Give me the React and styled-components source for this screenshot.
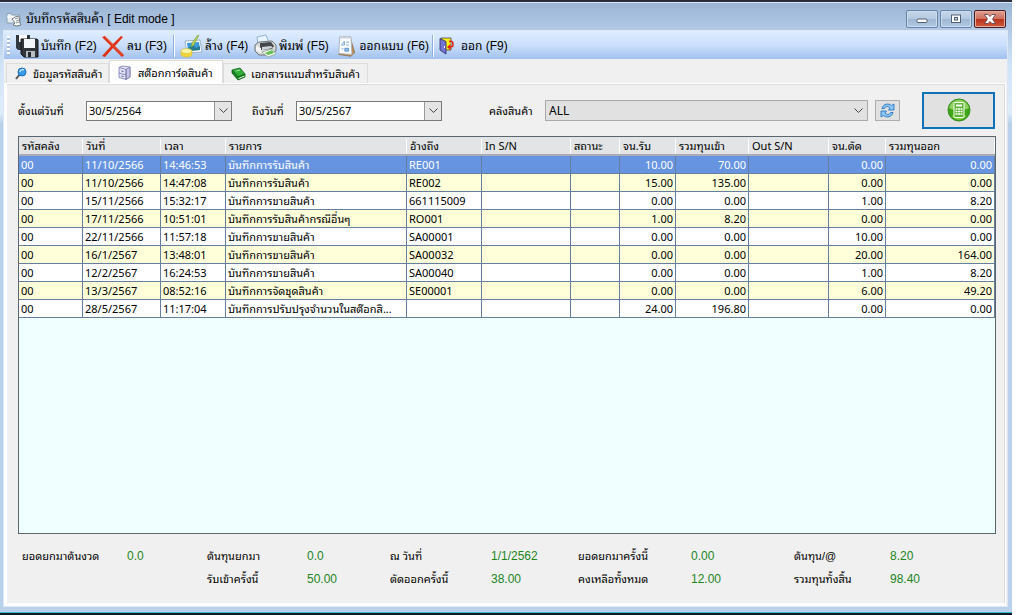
import React from "react";
import styled, {createGlobalStyle} from 'styled-components';

const FONT_UI = '"Liberation Sans", "Noto Sans Thai Looped", "Noto Sans Thai", sans-serif';
const FONT_GRID = '"Noto Sans", "Noto Sans Thai Looped", "Noto Sans Thai", sans-serif';

const color = {
    frame: '#b9d1ea',
    face: '#f0f0f0',
    line: '#dcdcdc',
    grid: '#64809c',
    selected: '#6694e0',
    alternate: '#ffffd9',
    empty: '#f0ffff',
    green: '#1d861d',
};

const GlobalStyle = createGlobalStyle`
    * {
        box-sizing: border-box;
    }
    body {
        margin: 0;
        background: #fff;
        color: #000;
        font: 12px/16px ${FONT_UI};
    }
    button, input, select {
        font: inherit;
        color: inherit;
    }
`;

const Window = styled.div`
    display: flex;
    flex-direction: column;
    min-height: 100vh;
    margin-right: 5px;
    padding: 0 5px 7px 4px;
    background: linear-gradient(#99b4d4 0, #b5cce8 31px, #cfe2f6 60px, #e0eefb 110px, ${color.frame} 122px);
    border-top: 2px solid #2b2d3c;
    border-bottom: 2px solid #0a1c24;
    box-shadow: inset 0 -1px 0 #3fb8d0, inset 0 1px 0 #dfe9f5;
`;

const TitleBar = styled.header`
    display: flex;
    align-items: center;
    height: 29px;
    padding-top: 5px;
    padding-left: 2px;
`;

const Title = styled.h1`
    flex: 1;
    margin: 0 0 0 4px;
    font-size: 12px;
    font-weight: normal;
`;

const WindowButtons = styled.div`
    display: flex;
    gap: 2px;
    margin-right: 1px;
`;

const WindowButton = styled.button`
    display: flex;
    align-items: center;
    justify-content: center;
    width: 32px;
    height: 18px;
    padding: 0;
    border: 1px solid ${p => p.$close ? '#4a1a1e' : '#6883a3'};
    border-radius: 2px;
    background: ${p => p.$close
        ? 'linear-gradient(#dfa091, #cd6f5c 48%, #b7321b 50%, #cf5a3c)'
        : 'linear-gradient(#c4d6ea, #b5cae2 48%, #9db6d3 50%, #b3cae3)'};
    box-shadow: inset 0 0 0 1px ${p => p.$close ? '#e5aca0' : '#cbdcee'};
`;

const Client = styled.main`
    display: flex;
    flex: 1;
    flex-direction: column;
    background: ${color.face};
    box-shadow: 0 0 0 1px #dce8f5;
`;

const ToolBar = styled.nav`
    display: flex;
    align-items: center;
    height: 28px;
    padding: 1px 0 0 3px;
    background: linear-gradient(#e0edff, #cbdffc 50%, #a2c1ef);
`;

const Grip = styled.span`
    width: 3px;
    height: 20px;
    margin-right: 3px;
    background: repeating-linear-gradient(#fff 0 2px, #a9c0e2 2px 4px);
`;

const ToolButton = styled.button`
    display: flex;
    align-items: center;
    gap: ${p => p.$gap || 2}px;
    width: ${p => p.$width}px;
    padding: 0 2px;
    border: 0;
    background: none;
    white-space: nowrap;
`;

const Separator = styled.span`
    width: 2px;
    height: 22px;
    margin: 0 2px 0 1px;
    border-left: 1px solid #8fb0de;
    background: #fff;
`;

const Tabs = styled.div`
    display: flex;
    align-items: flex-end;
    height: 24px;
    padding-left: 2px;
`;

const Tab = styled.button`
    display: flex;
    align-items: center;
    gap: ${p => p.$active ? 6 : 5}px;
    width: ${p => p.$width}px;
    height: ${p => p.$active ? 23 : 20}px;
    padding: 1px 0 0 ${p => p.$active ? 8 : 7}px;
    border: 1px solid ${color.line};
    border-bottom: 0;
    background: ${p => p.$active ? '#fff' : color.face};
    font-size: 11px;
    white-space: nowrap;
`;

const Page = styled.section`
    display: flex;
    flex: 1;
    flex-direction: column;
    margin: 0 1px 0 0;
    padding: 8px 9px 16px 11px;
    border: solid #fff;
    border-width: 1px 1px 3px 3px;
    box-shadow: inset -1px 1px 0 ${color.line};
`;

const Filters = styled.form`
    display: flex;
    align-items: center;
    height: 37px;
    margin: 0 1px 7px 0;
`;

const Label = styled.label`
    flex: none;
    width: ${p => p.$width}px;
    font-size: 11px;
    white-space: nowrap;
`;

const StoreLabel = styled(Label)`
    margin-left: 27px;
`;

const DateField = styled.div`
    display: flex;
    flex: none;
    width: 146px;
    height: 20px;
    margin-right: 20px;
    border: 1px solid #7a7a7a;
    background: #fff;
`;

const DateInput = styled.input`
    flex: 1;
    min-width: 0;
    padding: 0 2px;
    border: 0;
    background: none;
    font: 11px/16px ${FONT_GRID};
`;

const DropButton = styled.button`
    display: flex;
    align-items: center;
    justify-content: center;
    width: 17px;
    padding: 0;
    border: 0;
    border-left: 1px solid #9a9a9a;
    background: #e4e4e4;
`;

const SelectField = styled.div`
    display: flex;
    flex: 1;
    align-items: center;
    height: 21px;
    padding-right: 4px;
    border: 1px solid #a9a9a9;
    background: #e1e1e1;
`;

const Select = styled.select`
    flex: 1;
    height: 19px;
    padding: 0 3px;
    border: 0;
    appearance: none;
    background: none;
    font: 12px/16px ${FONT_GRID};
`;

const RefreshButton = styled.button`
    display: flex;
    align-items: center;
    justify-content: center;
    width: 25px;
    height: 21px;
    margin: 0 22px 0 7px;
    padding: 0;
    border: 1px solid #adadad;
    background: #e1e1e1;
`;

const CalculateButton = styled.button`
    display: flex;
    align-items: center;
    justify-content: center;
    width: 73px;
    height: 37px;
    padding: 0 0 2px;
    border: 2px solid #0f72b8;
    background: #e1e1e1;
`;

const GridBox = styled.div`
    flex: 1;
    border: 1px solid #5a6670;
    background: ${color.empty};
`;

const Table = styled.table`
    width: 100%;
    table-layout: fixed;
    border-collapse: separate;
    border-spacing: 0;
    font: 11px/16px ${FONT_GRID};
`;

const HeadCell = styled.th`
    height: 19px;
    padding: 0 3px;
    border-bottom: 2px solid #a9abb6;
    background: linear-gradient(#fff, #fff) right / 1px 14px no-repeat, #e2e4e5;
    font-weight: normal;
    line-height: 16px;
    text-align: left;
    white-space: nowrap;
`;

const Row = styled.tr`
    background: ${p => p.$selected ? color.selected : p.$alternate ? color.alternate : '#fff'};
    color: ${p => p.$selected ? '#fff' : '#000'};
`;

const Cell = styled.td`
    height: 18px;
    padding: 0 2px;
    overflow: hidden;
    border-right: 1px solid ${color.grid};
    border-bottom: 1px solid ${color.grid};
    text-align: ${p => p.$number ? 'right' : 'left'};
    text-overflow: ellipsis;
    white-space: nowrap;
`;

const Totals = styled.div`
    display: grid;
    grid-template-columns: 105fr 80fr 100fr 83fr 101fr 87fr 113fr 103fr 96fr 106fr;
    gap: 7px 0;
    padding: 14px 0 0 4px;
    white-space: nowrap;
`;

const TotalLabel = styled.span`
    grid-column: ${p => p.$column};
    font-size: 11px;
`;

const TotalValue = styled.output`
    color: ${color.green};
`;

const WindowIcon = () => (
    <svg width="16" height="16" viewBox="0 0 16 16">
        <path d="M1 2.500h4l1 1.500h8V12H1z" fill="#e6edf3" stroke="#8ba0b4"/>
        <path d="M1.500 6h12" stroke="#fff" strokeWidth="2"/>
        <path d="M6 8l3-2 4-1 1 7 1 2-4 1-4-1 2-2z" fill="#fafafa" stroke="#6f7880"/>
        <path d="M9 8l3-1M10 10l3-1M10 12l3-1" stroke="#899"/>
    </svg>
);

const SaveIcon = () => (
    <svg width="24" height="24" viewBox="0 0 24 24">
        <path d="M1 1h14v15H3l-2-2z" fill="#333941"/>
        <path d="M4 1h8v7H4z" fill="#fff"/>
        <path d="M6 5h16l1 1v17H9l-3-3z" fill="#30353b" stroke="#15191d"/>
        <path d="M9 5h11v9H9z" fill="#f4f7f9"/>
        <path d="M11 17h9v6h-9z" fill="#b7bec4"/>
        <path d="M13 18h3v5h-3z" fill="#24282c"/>
    </svg>
);

const DeleteIcon = () => (
    <svg width="24" height="24" viewBox="0 0 24 24">
        <path d="M1 3l3-1 8 8 8-8 2 1-8 9 9 9-2 2-9-9-8 9-3-1 9-10z" fill="#df3015"/>
        <path d="M4 3l17 18" stroke="#f0583c" strokeWidth="1"/>
    </svg>
);

const ClearIcon = () => (
    <svg width="24" height="24" viewBox="0 0 24 24">
        <path d="M6 7l15-1 2 12-15 1z" fill="#fafdff" stroke="#9bb6c8"/>
        <path d="M8 9l12-1 1 8-12 1z" fill="#3999dc"/>
        <path d="M9 14l5-3 3 3 4-2v4l-12 1z" fill="#267c8c"/>
        <path d="M20 1l-5 10-3 2 1-4 5-7z" fill="#b4cf5b" stroke="#789c37" strokeWidth=".6"/>
        <path d="M2 17v3c0 4 11 4 11 0v-3z" fill="#f2d638" stroke="#dabd35" strokeWidth=".7"/>
        <ellipse cx="7.500" cy="17" rx="5.500" ry="2.500" fill="#fff5a8" stroke="#d6bd3b" strokeWidth=".7"/>
    </svg>
);

const PrintIcon = () => (
    <svg width="24" height="24" viewBox="0 0 24 24">
        <path d="M4 3l9-2 3 8-11 2z" fill="#e9f5ff" stroke="#91b5d6"/>
        <path d="M2 11l4-3 13-1 4 4v6l-8 4H6l-4-4z" fill="#d8dadc" stroke="#6e7377"/>
        <path d="M7 9l11-1 3 4-2 3-12 1z" fill="#44484d"/>
        <path d="M3 12l5 2v5l-5-3z" fill="#f7f7f7"/>
        <path d="M9 13l9-1 2 2-11 2z" fill="#cfd5d9"/>
        <path d="M9 18l10-3 4 5-8 3z" fill="#f1fff0" stroke="#899f86" strokeWidth=".7"/>
        <path d="M12 19l7-3 2 3-6 2z" fill="#69bd57"/>
    </svg>
);

const DesignIcon = () => (
    <svg width="24" height="24" viewBox="0 0 24 24">
        <path d="M16 2l5 17-4 4L4 21z" fill="#b88b55" stroke="#86633b" strokeWidth=".7"/>
        <path d="M5 2h12l1 19-14-1z" fill="#fafcff" stroke="#adb5bf"/>
        <path d="M5 2h12v2H5z" fill="#ccd3da"/>
        <path d="M7 11l3-4v4zM12 8h3M12 11h3M7 15h2" stroke="#5b91c9" strokeWidth=".8" fill="none"/>
        <path d="M10.500 14.500h4v3h-4z" fill="#9dc5ed" stroke="#568fc6"/>
    </svg>
);

const ExitIcon = () => (
    <svg width="18" height="18" viewBox="0 0 18 18">
        <path d="M3 1h10v12H3z" fill="#fff01d" stroke="#444" strokeWidth=".8"/>
        <path d="M2 1.500l6 3v12.500l-6-4z" fill="#7474d4" stroke="#27275d" strokeWidth=".8"/>
        <path d="M6.500 9v2" stroke="#fff"/>
        <path d="M11 4.500c3-1 4 0 4 3.500 0 1-1 2-3 2" fill="none" stroke="#e51c17" strokeWidth="1.500"/>
        <path d="M9 10l3.500-3v6z" fill="#e51c17"/>
    </svg>
);

const SearchIcon = () => (
    <svg width="14" height="14" viewBox="0 0 14 14">
        <path d="M6 7l-4 5" stroke="#555" strokeWidth="2"/>
        <circle cx="8" cy="5" r="4" fill="#3c9be8" stroke="#1769b9"/>
        <path d="M6 5c0-2 2-3 4-2" fill="none" stroke="#b8e2ff" strokeWidth="1.500"/>
    </svg>
);

const CardIcon = () => (
    <svg width="14" height="16" viewBox="0 0 14 16">
        <path d="M1 2.500L5 1l7 1v10l-4 2.500-7-2z" fill="#e4e4f7" stroke="#7676ad" strokeWidth=".8"/>
        <path d="M8 4.500L12 2v10l-4 2.500z" fill="#c4c4e6" stroke="#7676ad" strokeWidth=".8"/>
        <path d="M1 2.500l7 2v10M1 8l7 2" fill="none" stroke="#7676ad" strokeWidth=".8"/>
        <path d="M3.500 6l2 .5M3.500 11l2 .5" stroke="#4e559e"/>
    </svg>
);

const BookIcon = () => (
    <svg width="15" height="14" viewBox="0 0 15 14">
        <path d="M1 3l8-2 5 6-7 3z" fill="#2fae38" stroke="#096517" strokeWidth=".8"/>
        <path d="M1 3v3l6 7 7-3V7l-7 3z" fill="#168522" stroke="#075d12" strokeWidth=".8"/>
        <path d="M7.500 11.500l6-2.500" stroke="#e7f2dd"/>
        <path d="M5 4l4-1" stroke="#a6e3a3"/>
    </svg>
);

const Chevron = () => (
    <svg width="9" height="6" viewBox="0 0 9 6">
        <path d="M0.5 0.5l4 4 4-4" fill="none" stroke="#444"/>
    </svg>
);

const RefreshIcon = () => (
    <svg width="15" height="15" viewBox="0 0 15 15" fill="#8cc6f7" stroke="#1b69ba" strokeWidth=".8">
        <path d="M2 5.500C3 .5 9 0 11.500 2.500L14 1v6H8.500l1.500-2C8 3 5.500 3 4.500 5.500z"/>
        <path d="M13 9.500c-1 5-7 5.500-9.500 3L1 14V8h5.500L5 10c2 2 4.500 2 5.500-.5z"/>
    </svg>
);

const CalculatorIcon = () => (
    <svg width="24" height="24" viewBox="0 0 24 24">
        <circle cx="12" cy="12" r="11" fill="#3fa517" stroke="#3a8f22"/>
        <path d="M2 10c3-11 17-11 20 0-6 3-14 3-20 0z" fill="#8fd163"/>
        <path d="M5 18c4-3 10-3 14 0-4 5-10 5-14 0z" fill="#7ed63c"/>
        <rect x="7" y="4.500" width="10" height="15" rx="1" fill="#5cb431" stroke="#f6fff0"/>
        <path d="M9 7.500h6" stroke="#fff" strokeWidth="2"/>
        <path d="M8.500 11h2m.5 0h2m.5 0h2M8.500 13.500h2m.5 0h2m.5 0h2M8.500 16h2m.5 0h2m.5 0h2" stroke="#fff" strokeWidth="1.500"/>
    </svg>
);

const MinimizeIcon = () => (
    <svg width="12" height="10" viewBox="0 0 12 10">
        <rect x="1" y="5" width="10" height="3.500" rx="1" fill="#fff" stroke="#53606e"/>
    </svg>
);

const MaximizeIcon = () => (
    <svg width="12" height="10" viewBox="0 0 12 10">
        <rect x="1.500" y="1" width="9" height="7.500" fill="#fff" stroke="#53606e"/>
        <rect x="4.500" y="3.500" width="3" height="2.500" fill="#b5cae2" stroke="#53606e"/>
    </svg>
);

const CloseIcon = () => (
    <svg width="12" height="10" viewBox="0 0 12 10">
        <path d="M.5 .5h3.500l2 2 2-2h3.500L8.500 5l3 4.500H8l-2-2-2 2H.5l3-4.500z" fill="#fff" stroke="#5a3a48" strokeWidth=".8"/>
    </svg>
);

const columns = [
    {title: 'รหัสคลัง', width: 64},
    {title: 'วันที่', width: 78},
    {title: 'เวลา', width: 65},
    {title: 'รายการ', width: 181},
    {title: 'อ้างถึง', width: 75},
    {title: 'In S/N', width: 89},
    {title: 'สถานะ', width: 49},
    {title: 'จน.รับ', width: 56, number: true},
    {title: 'รวมทุนเข้า', width: 73, number: true},
    {title: 'Out S/N', width: 80},
    {title: 'จน.ตัด', width: 57, number: true},
    {title: 'รวมทุนออก', number: true},
];

const rows = [
    ['00', '11/10/2566', '14:46:53', 'บันทึกการรับสินค้า', 'RE001', '', '', '10.00', '70.00', '', '0.00', '0.00'],
    ['00', '11/10/2566', '14:47:08', 'บันทึกการรับสินค้า', 'RE002', '', '', '15.00', '135.00', '', '0.00', '0.00'],
    ['00', '15/11/2566', '15:32:17', 'บันทึกการขายสินค้า', '661115009', '', '', '0.00', '0.00', '', '1.00', '8.20'],
    ['00', '17/11/2566', '10:51:01', 'บันทึกการรับสินค้ากรณีอื่นๆ', 'RO001', '', '', '1.00', '8.20', '', '0.00', '0.00'],
    ['00', '22/11/2566', '11:57:18', 'บันทึกการขายสินค้า', 'SA00001', '', '', '0.00', '0.00', '', '10.00', '0.00'],
    ['00', '16/1/2567', '13:48:01', 'บันทึกการขายสินค้า', 'SA00032', '', '', '0.00', '0.00', '', '20.00', '164.00'],
    ['00', '12/2/2567', '16:24:53', 'บันทึกการขายสินค้า', 'SA00040', '', '', '0.00', '0.00', '', '1.00', '8.20'],
    ['00', '13/3/2567', '08:52:16', 'บันทึกการจัดชุดสินค้า', 'SE00001', '', '', '0.00', '0.00', '', '6.00', '49.20'],
    ['00', '28/5/2567', '11:17:04', 'บันทึกการปรับปรุงจำนวนในสต๊อกสิ...', '', '', '', '24.00', '196.80', '', '0.00', '0.00'],
];

const totals = [
    {label: 'ยอดยกมาต้นงวด', value: '0.0', column: 1},
    {label: 'ต้นทุนยกมา', value: '0.0', column: 3},
    {label: 'ณ วันที่', value: '1/1/2562', column: 5},
    {label: 'ยอดยกมาครั้งนี้', value: '0.00', column: 7},
    {label: 'ต้นทุน/@', value: '8.20', column: 9},
    {label: 'รับเข้าครั้งนี้', value: '50.00', column: 3},
    {label: 'ตัดออกครั้งนี้', value: '38.00', column: 5},
    {label: 'คงเหลือทั้งหมด', value: '12.00', column: 7},
    {label: 'รวมทุนทั้งสิ้น', value: '98.40', column: 9},
];

const DatePicker = ({id, value}) => (
    <DateField>
        <DateInput id={id} defaultValue={value}/>
        <DropButton type="button" aria-label="เลือกวันที่"><Chevron/></DropButton>
    </DateField>
);

const StockTable = () => (
    <Table>
        <colgroup>
            {columns.map(c => <col key={c.title} width={c.width}/>)}
        </colgroup>
        <thead>
            <tr>
                {columns.map(c => <HeadCell key={c.title}>{c.title}</HeadCell>)}
            </tr>
        </thead>
        <tbody>
            {rows.map((row, i) => (
                <Row key={i} $selected={i === 0} $alternate={i % 2 === 1}>
                    {row.map((text, j) => <Cell key={j} $number={columns[j].number}>{text}</Cell>)}
                </Row>
            ))}
        </tbody>
    </Table>
);

const App = () => (
    <Window>
        <GlobalStyle/>
        <TitleBar>
            <WindowIcon/>
            <Title>บันทึกรหัสสินค้า [ Edit mode ]</Title>
            <WindowButtons>
                <WindowButton aria-label="Minimize"><MinimizeIcon/></WindowButton>
                <WindowButton aria-label="Maximize"><MaximizeIcon/></WindowButton>
                <WindowButton aria-label="Close" $close><CloseIcon/></WindowButton>
            </WindowButtons>
        </TitleBar>
        <Client>
            <ToolBar>
                <Grip/>
                <ToolButton $width={86}><SaveIcon/>บันทึก (F2)</ToolButton>
                <ToolButton $width={73}><DeleteIcon/>ลบ (F3)</ToolButton>
                <Separator/>
                <ToolButton $width={74}><ClearIcon/>ล้าง (F4)</ToolButton>
                <ToolButton $width={82}><PrintIcon/>พิมพ์ (F5)</ToolButton>
                <ToolButton $width={98}><DesignIcon/>ออกแบบ (F6)</ToolButton>
                <Separator/>
                <ToolButton $width={80} $gap={5}><ExitIcon/>ออก (F9)</ToolButton>
            </ToolBar>
            <Tabs role="tablist">
                <Tab role="tab" $width={103}><SearchIcon/>ข้อมูลรหัสสินค้า</Tab>
                <Tab role="tab" aria-selected="true" $width={114} $active><CardIcon/>สต๊อกการ์ดสินค้า</Tab>
                <Tab role="tab" $width={145}><BookIcon/>เอกสารแนบสำหรับสินค้า</Tab>
            </Tabs>
            <Page>
                <Filters>
                    <Label htmlFor="from" $width={68}>ตั้งแต่วันที่</Label>
                    <DatePicker id="from" value="30/5/2564"/>
                    <Label htmlFor="to" $width={44}>ถึงวันที่</Label>
                    <DatePicker id="to" value="30/5/2567"/>
                    <StoreLabel htmlFor="store" $width={56}>คลังสินค้า</StoreLabel>
                    <SelectField>
                        <Select id="store">
                            <option>ALL</option>
                        </Select>
                        <Chevron/>
                    </SelectField>
                    <RefreshButton type="button" aria-label="Refresh"><RefreshIcon/></RefreshButton>
                    <CalculateButton type="button" aria-label="Calculate"><CalculatorIcon/></CalculateButton>
                </Filters>
                <GridBox>
                    <StockTable/>
                </GridBox>
                <Totals>
                    {totals.map(t => (
                        <React.Fragment key={t.label}>
                            <TotalLabel $column={t.column}>{t.label}</TotalLabel>
                            <TotalValue>{t.value}</TotalValue>
                        </React.Fragment>
                    ))}
                </Totals>
            </Page>
        </Client>
    </Window>
);

export default App;
